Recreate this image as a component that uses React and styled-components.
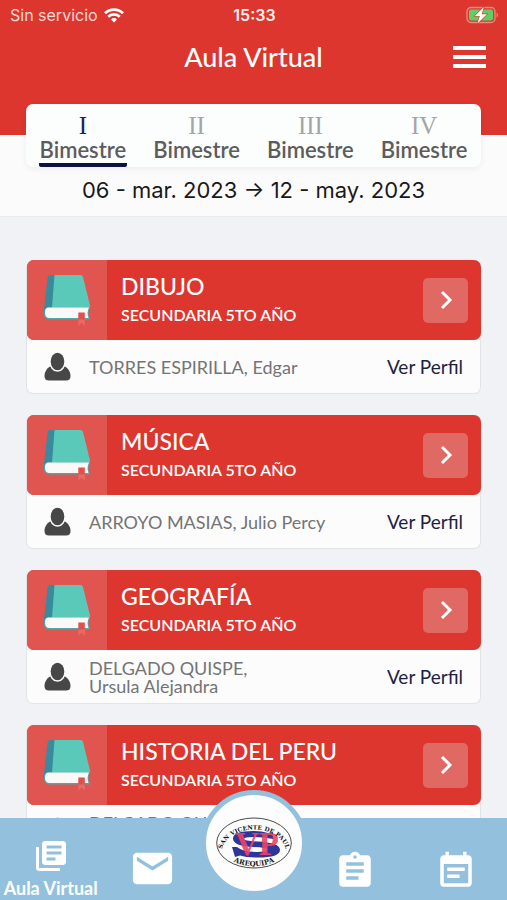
import React, { useState } from 'react'
import styled, { createGlobalStyle } from 'styled-components'
import { MdAssignment, MdEmail, MdEventNote, MdLibraryBooks } from 'react-icons/md'

const GlobalStyle = createGlobalStyle`
  * {
    box-sizing: border-box;
  }
  body {
    margin: 0;
    background: #f0f2f6;
    font-family: Lato, "Open Sans", sans-serif;
  }
  button {
    border: none;
    padding: 0;
    background: none;
    font: inherit;
    cursor: pointer;
  }
  a {
    text-decoration: none;
  }
  h1, h2, p {
    margin: 0;
    font-weight: 400;
  }
`
const Screen = styled.div`
  display: flex;
  flex-direction: column;
  height: 100vh;
`
const Header = styled.header`
  flex: none;
  padding-bottom: 51px;
  background: #dc362e;
  color: #fff;
`
const StatusBar = styled.div`
  display: grid;
  grid-template-columns: 1fr auto 1fr;
  align-items: center;
  height: 30px;
  padding: 0 8px 0 10px;
  font-family: Inter, sans-serif;
  font-size: 16px;
`
const Carrier = styled.span`
  display: flex;
  align-items: center;
  gap: 6px;
  color: #fbd9d6;
`
const Clock = styled.time`
  font-weight: 600;
  color: #fff0ef;
`
const BatteryIcon = styled.svg`
  justify-self: end;
`
const TitleBar = styled.div`
  display: grid;
  grid-template-columns: 1fr auto 1fr;
  align-items: center;
  height: 54px;
  padding: 0 21px;
`
const Title = styled.h1`
  grid-column: 2;
  font-size: 27px;
  font-weight: 500;
  line-height: 32px;
`
const MenuButton = styled.button`
  display: flex;
  justify-self: end;
`
const Period = styled.section`
  display: flex;
  flex-direction: column;
  flex: none;
  background: #fbfbfc;
  border-bottom: 1px solid #e9ebee;
`
const Tabs = styled.div`
  display: flex;
  margin: -31px 26px 0;
  background: #fcfdfd;
  border-radius: 7px;
  box-shadow: 0 2px 6px rgba(0, 0, 0, 0.06);
`
const Tab = styled.button`
  flex: 1;
  display: flex;
  flex-direction: column;
  align-items: center;
  padding-top: 10px;
  color: #5c5c5c;
`
const Roman = styled.span`
  font-family: "Liberation Serif", serif;
  font-size: 25px;
  line-height: 24px;
  color: ${props => props.$active ? '#1b2154' : '#a3a6a5'};
`
const TabLabel = styled.span`
  padding: 0 1px 2px;
  font-size: 22px;
  font-weight: 600;
  line-height: 23px;
  border-bottom: 4px solid ${props => props.$active ? '#0d1240' : 'transparent'};
  border-radius: 2px;
`
const Dates = styled.p`
  padding-bottom: 2px;
  font-family: Inter, sans-serif;
  font-size: 22px;
  line-height: 47px;
  text-align: center;
  color: #191919;
`
const Courses = styled.main`
  flex: 1;
  min-height: 0;
  display: flex;
  flex-direction: column;
  gap: 21px;
  padding: 43px 26px 0;
  overflow-y: auto;
  scrollbar-width: none;
`
const Card = styled.article`
  flex: none;
  background: #fcfcfd;
  border: 1px solid #e2e4e8;
  border-top: none;
  border-radius: 7px;
`
const CardTop = styled.div`
  display: flex;
  align-items: center;
  height: 80px;
  margin-right: -1px;
  padding-right: 13px;
  overflow: hidden;
  border-radius: 7px;
  background: #dc362e;
  color: #fff;
`
const Cover = styled.div`
  display: flex;
  align-items: center;
  justify-content: center;
  width: 80px;
  height: 80px;
  background: #e15551;
`
const CourseText = styled.div`
  flex: 1;
  padding-left: 14px;
`
const CourseName = styled.h2`
  font-size: 23px;
  font-weight: 500;
  line-height: 30px;
`
const Level = styled.p`
  font-size: 16px;
  font-weight: 600;
  line-height: 28px;
`
const OpenButton = styled.button`
  display: flex;
  align-items: center;
  justify-content: center;
  width: 45px;
  height: 45px;
  border-radius: 5px;
  background: #e16964;
`
const CardBottom = styled.div`
  display: flex;
  align-items: center;
  height: 53px;
  padding: 0 17px;
`
const Teacher = styled.p`
  flex: 1;
  padding-left: 18px;
  font-size: 18px;
  line-height: 18px;
  color: #747474;
  white-space: pre-line;
`
const ProfileLink = styled.a`
  font-size: 19px;
  color: #1d2145;
`
const Nav = styled.nav`
  position: relative;
  flex: none;
  display: flex;
  height: 82px;
  background: #93c1dd;
`
const NavItem = styled.a`
  flex: 1;
  display: flex;
  flex-direction: column;
  align-items: center;
  justify-content: flex-end;
  height: 82px;
  padding-bottom: ${props => props.$labelled ? '0' : '8px'};
  color: #fff;
`
const NavLabel = styled.span`
  font-size: 18px;
  font-weight: 700;
  line-height: 28px;
  white-space: nowrap;
  margin-bottom: -2px;
`
const LogoSpace = styled.div`
  flex: 1;
`
const LogoButton = styled.button`
  position: absolute;
  left: 50%;
  bottom: 4px;
  display: flex;
  transform: translateX(-50%);
  border: 5px solid #93c1dd;
  border-radius: 50%;
  background: #fdfdfd;
`

const courses = [
  { name: 'DIBUJO', teacher: 'TORRES ESPIRILLA, Edgar' },
  { name: 'MÚSICA', teacher: 'ARROYO MASIAS, Julio Percy' },
  { name: 'GEOGRAFÍA', teacher: 'DELGADO QUISPE,\nUrsula Alejandra' },
  { name: 'HISTORIA DEL PERU', teacher: 'DELGADO QUISPE,\nUrsula Alejandra' },
]

const Wifi = () => (
  <svg width="20" height="15" viewBox="0 0 20 15" fill="none" stroke="#fff" strokeWidth="2.7">
    <path d="M1 5.2a13 13 0 0 1 18 0M4.2 8.7a8.4 8.4 0 0 1 11.6 0" />
    <path d="M10 14.6l-3-3.1a4.4 4.4 0 0 1 6 0z" fill="#fff" stroke="none" />
  </svg>
)

const Battery = () => (
  <BatteryIcon width="33" height="18" viewBox="0 0 33 18">
    <rect x="1" y="1.5" width="28" height="15" rx="4" fill="none" stroke="#ea8b83" strokeWidth="1.3" />
    <path d="M30.6 6.5c1.8.8 1.8 4.2 0 5z" fill="#ea8b83" />
    <rect x="3" y="3.5" width="24" height="11" rx="2" fill="#5fcf65" />
    <path d="M17.8 1L8.8 10h5l-2.4 7.6L21 8.2h-5.2z" fill="#fff" stroke="#dc362e" strokeWidth="1.2" paintOrder="stroke" />
  </BatteryIcon>
)

const Chevron = () => (
  <svg width="14" height="20" viewBox="0 0 14 20" fill="none" stroke="#fff" strokeWidth="3">
    <path d="M3 2l8 8-8 8" />
  </svg>
)

const Book = () => (
  <svg width="48" height="54" viewBox="0 0 48 54">
    <path d="M7 2h10v33H9L3 45Q0 43 1 36L4.600 4Q5 2 7 2z" fill="#398a9d" />
    <path d="M11.500 2H37.500q2 0 2.500 2L47 32.500 46.500 35H9z" fill="#5bc9ba" />
    <path d="M4 34.500h43q-3 5 0 12H6q-5-.5-5-6t3-6z" fill="#4fa8a8" />
    <path d="M5 34.500h41q-2.500 5-.5 10.500H6q-4-.3-4-5.300t3-5.200z" fill="#faf9f7" />
    <path d="M35.300 39.500h6.500V53l-3.200-3.500-3.300 3.500z" fill="#e0504c" />
    <path d="M35.300 46.500h6.500V53l-3.200-3.500-3.300 3.500z" fill="#ea6a66" />
  </svg>
)

const Person = () => (
  <svg width="27" height="30" viewBox="0 0 27 30" fill="#474747">
    <path d="M6 14.500C2 17 .5 21 .5 24q0 4.500 4.500 4.500h17q4.500 0 4.500-4.500c0-3-1.500-7-5.500-9.500z" />
    <ellipse cx="13.500" cy="9.500" rx="6.800" ry="8.800" stroke="#fcfcfd" strokeWidth="3" paintOrder="stroke" />
  </svg>
)

const Logo = () => (
  <svg width="96" height="96" viewBox="0 0 96 96">
    <ellipse cx="48" cy="48" rx="37.300" ry="25" fill="none" stroke="#4a4a4a" strokeWidth="1" />
    <path d="M67 37v7q-9-2-20-2-9 0-9 2 0 2 14 2.500 22 1 22 8.500 0 7.500-22 7.500-12 0-18-2l-5 1.500-3-10h5q6 5 20 5 10 0 10-2.500 0-2-14-2.500-20-1-20-8.500 0-7.500 20-7.500 9 0 15 2z" fill="#30359c" />
    <text x="29" y="60" fontFamily="Liberation Serif, serif" fontWeight="700" fontSize="33" fill="#ec4564" fillOpacity=".93">VP</text>
    <path id="logo-top" d="M16.500 53A32 22.500 0 0 1 79.500 53" fill="none" />
    <path id="logo-bottom" d="M20 62.500Q48 80 76 62.500" fill="none" />
    <g fontFamily="DejaVu Serif, serif" fontWeight="700" fill="#161616" textAnchor="middle">
      <text fontSize="6">
        <textPath href="#logo-top" startOffset="50%">SAN VICENTE DE PAUL</textPath>
      </text>
      <text fontSize="7">
        <textPath href="#logo-bottom" startOffset="50%">AREQUIPA</textPath>
      </text>
    </g>
  </svg>
)

const CourseCard = ({ name, teacher }) => (
  <Card>
    <CardTop>
      <Cover><Book /></Cover>
      <CourseText>
        <CourseName>{name}</CourseName>
        <Level>SECUNDARIA 5TO AÑO</Level>
      </CourseText>
      <OpenButton aria-label={`Abrir ${name}`}>
        <Chevron />
      </OpenButton>
    </CardTop>
    <CardBottom>
      <Person />
      <Teacher>{teacher}</Teacher>
      <ProfileLink href="#perfil">Ver Perfil</ProfileLink>
    </CardBottom>
  </Card>
)

const App = () => {

  const [active, setActive] = useState('I')

  return (
    <Screen>
      <GlobalStyle />
      <Header>
        <StatusBar>
          <Carrier>Sin servicio <Wifi /></Carrier>
          <Clock>15:33</Clock>
          <Battery />
        </StatusBar>
        <TitleBar>
          <Title>Aula Virtual</Title>
          <MenuButton aria-label="Menú">
            <svg width="33" height="24" viewBox="0 0 33 24" stroke="#fff" strokeWidth="4">
              <path d="M0 3h33M0 12h33M0 21h33" />
            </svg>
          </MenuButton>
        </TitleBar>
      </Header>
      <Period>
        <Tabs role="tablist">
          {['I', 'II', 'III', 'IV'].map((roman) => (
            <Tab
              key={roman}
              role="tab"
              aria-selected={roman === active}
              onClick={() => setActive(roman)}
            >
              <Roman $active={roman === active}>{roman}</Roman>
              <TabLabel $active={roman === active}>Bimestre</TabLabel>
            </Tab>
          ))}
        </Tabs>
        <Dates>06 - mar. 2023 → 12 - may. 2023</Dates>
      </Period>
      <Courses>
        {courses.map((course) => (
          <CourseCard key={course.name} {...course} />
        ))}
      </Courses>
      <Nav>
        <NavItem href="#aula" $labelled>
          <MdLibraryBooks size={36} />
          <NavLabel>Aula Virtual</NavLabel>
        </NavItem>
        <NavItem href="#mensajes" aria-label="Mensajes"><MdEmail size={47} /></NavItem>
        <LogoSpace />
        <NavItem href="#tareas" aria-label="Tareas"><MdAssignment size={42} /></NavItem>
        <NavItem href="#agenda" aria-label="Agenda"><MdEventNote size={42} /></NavItem>
        <LogoButton aria-label="San Vicente de Paul"><Logo /></LogoButton>
      </Nav>
    </Screen>
  )
}

export default App
